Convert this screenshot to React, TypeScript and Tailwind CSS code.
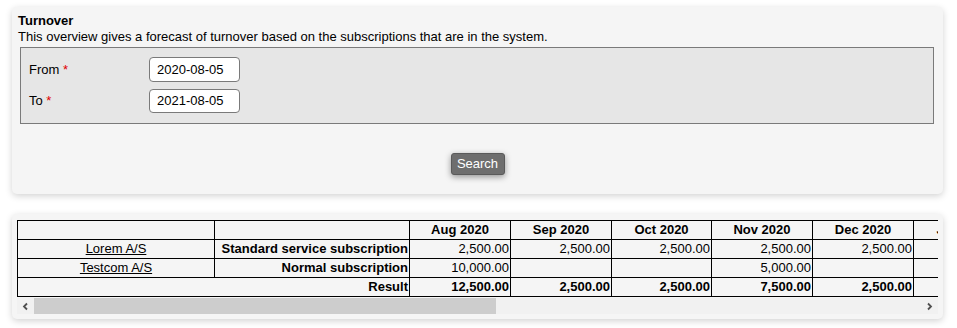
import React from "react";

const months = [
  "Aug 2020",
  "Sep 2020",
  "Oct 2020",
  "Nov 2020",
  "Dec 2020",
  "Jan 2021",
  "Feb 2021",
  "Mar 2021",
  "Apr 2021",
  "May 2021",
  "Jun 2021",
  "Jul 2021",
  "Aug 2021",
];

const rows: { company: string; sub: string; values: (string | null)[] }[] = [
  {
    company: "Lorem A/S",
    sub: "Standard service subscription",
    values: ["2,500.00", "2,500.00", "2,500.00", "2,500.00", "2,500.00", "2,500.00", "2,500.00", "2,500.00", "2,500.00", "2,500.00", "2,500.00", "2,500.00", "2,500.00"],
  },
  {
    company: "Testcom A/S",
    sub: "Normal subscription",
    values: ["10,000.00", null, null, "5,000.00", null, null, "5,000.00", null, null, "5,000.00", null, null, "5,000.00"],
  },
];

const totals = ["12,500.00", "2,500.00", "2,500.00", "7,500.00", "2,500.00", "2,500.00", "7,500.00", "2,500.00", "2,500.00", "7,500.00", "2,500.00", "2,500.00", "7,500.00"];

const monthWidths = [101, 101, 100, 101, 101, 101, 101, 101, 101, 101, 101, 101, 101];

export default function App() {
  return (
    <div
      className="min-h-[328px] bg-white pl-[12px] pt-[7px] text-[13px] text-black"
      style={{ fontFamily: '"Liberation Sans", Arial, sans-serif' }}
    >
      {/* Card 1 */}
      <div className="w-[931px] rounded-[5px] bg-[#f5f5f5] px-[6px] pb-[19px] pt-[6px] shadow-[0_2px_7px_rgba(0,0,0,0.18)]">
        <div className="font-bold leading-[16px]">Turnover</div>
        <div className="leading-[16px]">
          This overview gives a forecast of turnover based on the subscriptions that are in the system.
        </div>
        <div className="ml-[2px] mt-[2px] w-[914px] border border-[#7a7a7a] bg-[#e6e6e6] pb-[10px] pl-[8px] pt-[9px]">
          <div className="flex flex-col gap-[6px]">
            <div className="flex h-[25px] items-center">
              <div className="w-[120px]">
                From <span className="text-[#e00000]">*</span>
              </div>
              <div className="flex h-[25px] w-[91px] items-center rounded-[4px] border border-[#7a7a7a] bg-white pl-[7px]">
                2020-08-05
              </div>
            </div>
            <div className="flex h-[25px] items-center">
              <div className="w-[120px]">
                To <span className="text-[#e00000]">*</span>
              </div>
              <div className="flex h-[24px] w-[91px] items-center rounded-[4px] border border-[#7a7a7a] bg-white pl-[7px]">
                2021-08-05
              </div>
            </div>
          </div>
        </div>
        <div className="mt-[29px] flex justify-center">
          <button className="h-[22px] w-[54px] rounded-[3px] border border-[#5a5a5a] bg-[#6e6e6e] text-[13px] leading-[20px] text-white shadow-[0_2px_6px_rgba(0,0,0,0.4)]">
            Search
          </button>
        </div>
      </div>

      {/* Card 2 */}
      <div className="mt-[20px] w-[931px] rounded-[5px] bg-[#f5f5f5] px-[5px] pb-[5px] pt-[6px] shadow-[0_2px_7px_rgba(0,0,0,0.18)]">
        <div className="w-[921px] overflow-hidden">
          <table className="table-fixed border-collapse border border-black" style={{ width: 392 + monthWidths.reduce((a, b) => a + b, 0) }}>
            <colgroup>
              <col style={{ width: 197 }} />
              <col style={{ width: 195 }} />
              {monthWidths.map((w, i) => (
                <col key={i} style={{ width: w }} />
              ))}
            </colgroup>
            <thead>
              <tr>
                <th className="h-[19px] border border-black p-0"></th>
                <th className="h-[19px] border border-black p-0"></th>
                {months.map((m) => (
                  <th key={m} className="h-[19px] border border-black p-0 text-center font-bold leading-[18px]">
                    {m}
                  </th>
                ))}
              </tr>
            </thead>
            <tbody>
              {rows.map((r) => (
                <tr key={r.company}>
                  <td className="h-[19px] border border-black p-0 text-center leading-[18px]">
                    <a href="#" className="underline">
                      {r.company}
                    </a>
                  </td>
                  <td className="h-[19px] border border-black p-0 pr-[1px] text-right font-bold leading-[18px]">{r.sub}</td>
                  {r.values.map((v, i) => (
                    <td key={i} className="h-[19px] border border-black p-0 pr-[1px] text-right leading-[18px]">
                      {v ?? ""}
                    </td>
                  ))}
                </tr>
              ))}
              <tr>
                <td colSpan={2} className="h-[19px] border border-black p-0 pr-[1px] text-right font-bold leading-[18px]">
                  Result
                </td>
                {totals.map((v, i) => (
                  <td key={i} className="h-[19px] border border-black p-0 pr-[1px] text-right font-bold leading-[18px]">
                    {v}
                  </td>
                ))}
              </tr>
            </tbody>
          </table>
          {/* scrollbar */}
          <div className="mt-[1px] flex h-[16px] w-[921px] items-stretch bg-[#f1f1f1]">
            <div className="flex w-[17px] items-center justify-center">
              <svg width="9" height="9" viewBox="0 0 9 9">
                <path d="M6 1.5 L3 4.5 L6 7.5" fill="none" stroke="#505050" strokeWidth="1.8" />
              </svg>
            </div>
            <div className="w-[462px] bg-[#cdcdcd]"></div>
            <div className="flex-1"></div>
            <div className="flex w-[17px] items-center justify-center">
              <svg width="9" height="9" viewBox="0 0 9 9">
                <path d="M3 1.5 L6 4.5 L3 7.5" fill="none" stroke="#505050" strokeWidth="1.8" />
              </svg>
            </div>
          </div>
        </div>
      </div>
    </div>
  );
}
